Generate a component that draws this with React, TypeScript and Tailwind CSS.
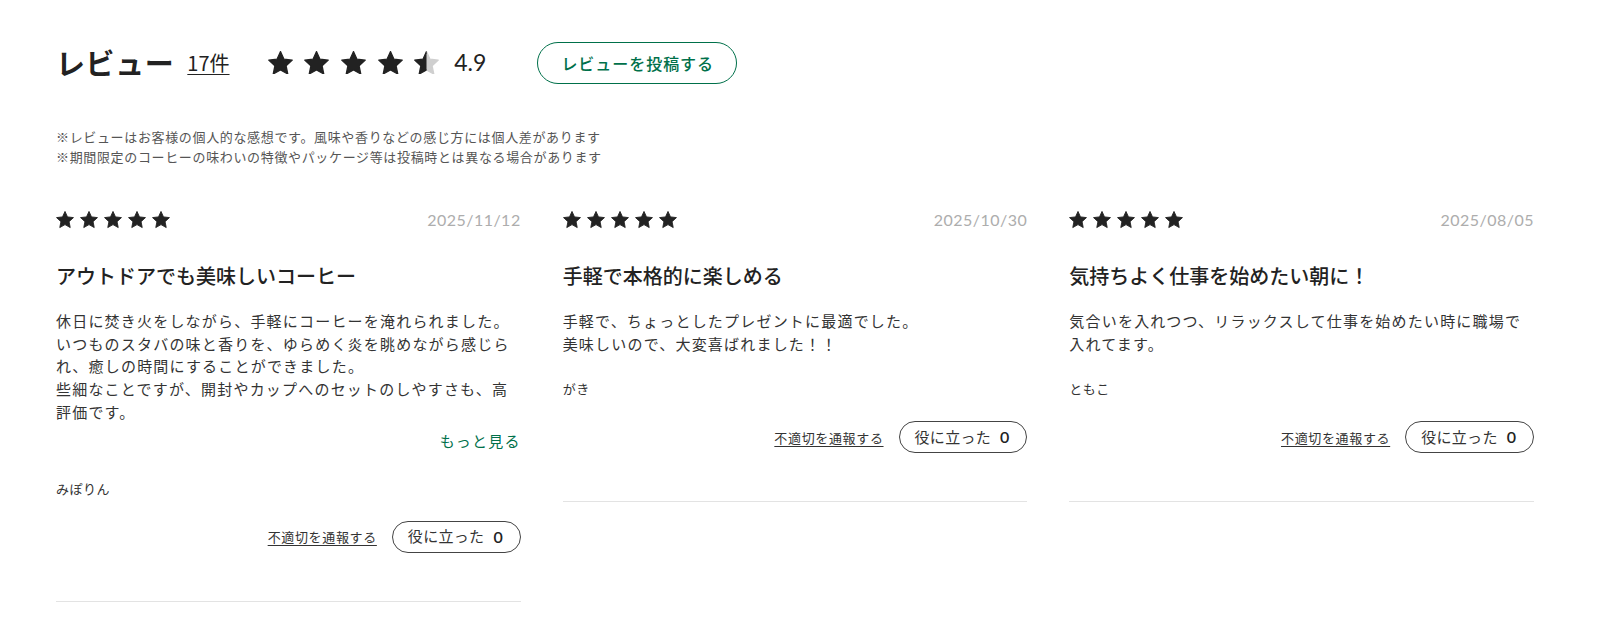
import React from "react";

const jp = "font-['Noto_Sans_CJK_JP',sans-serif]";
const num = "font-['Lato','Noto_Sans_CJK_JP',sans-serif]";

// chunky 5-point star, slightly rounded tips
const STAR = "50,0 64.11,30.58 97.55,34.55 72.83,57.42 79.39,90.45 50,74 20.61,90.45 27.17,57.42 2.45,34.55 35.89,30.58";

function Star({ size, fill = "#222" }: { size: number; fill?: string }) {
  return (
    <svg width={size} height={size * 0.95} viewBox="-0.5 -2.5 101 96">
      <polygon points={STAR} fill={fill} stroke={fill} strokeWidth="5" strokeLinejoin="round" />
    </svg>
  );
}

function HalfStar({ size }: { size: number }) {
  return (
    <svg width={size} height={size * 0.95} viewBox="-0.5 -2.5 101 96">
      <defs>
        <clipPath id="half-left">
          <rect x="-5" y="-5" width="55" height="110" />
        </clipPath>
      </defs>
      <polygon points={STAR} fill="#cfcfcf" stroke="#cfcfcf" strokeWidth="5" strokeLinejoin="round" />
      <polygon
        points={STAR}
        fill="#222"
        stroke="#222"
        strokeWidth="5"
        strokeLinejoin="round"
        clipPath="url(#half-left)"
      />
    </svg>
  );
}

type Review = {
  date: string;
  title: string;
  body: string;
  author: string;
  more?: boolean;
};

const reviews: Review[] = [
  {
    date: "2025/11/12",
    title: "アウトドアでも美味しいコーヒー",
    body: "休日に焚き火をしながら、手軽にコーヒーを淹れられました。\nいつものスタバの味と香りを、ゆらめく炎を眺めながら感じられ、癒しの時間にすることができました。\n些細なことですが、開封やカップへのセットのしやすさも、高評価です。",
    author: "みぽりん",
    more: true,
  },
  {
    date: "2025/10/30",
    title: "手軽で本格的に楽しめる",
    body: "手軽で、ちょっとしたプレゼントに最適でした。\n美味しいので、大変喜ばれました！！",
    author: "がき",
  },
  {
    date: "2025/08/05",
    title: "気持ちよく仕事を始めたい朝に！",
    body: "気合いを入れつつ、リラックスして仕事を始めたい時に職場で入れてます。",
    author: "ともこ",
  },
];

function ReviewCard({ r }: { r: Review }) {
  return (
    <div className="flex flex-col">
      <div className="flex h-[20px] items-center justify-between">
        <div className="flex items-center gap-[6px]">
          {[0, 1, 2, 3, 4].map((i) => (
            <Star key={i} size={18} />
          ))}
        </div>
        <span className={`${num} text-[16px] tracking-[0.03em] text-[#adadad]`}>{r.date}</span>
      </div>
      <h3 className={`${jp} mt-[32px] text-[20px] leading-[28px] font-medium text-[#222]`}>{r.title}</h3>
      <p className={`${jp} mt-[20px] whitespace-pre-line text-[15px] leading-[22.7px] tracking-[0.08em] text-[#333]`}>
        {r.body}
      </p>
      {r.more && (
        <div className="mt-[5px] flex justify-end pb-[2px]">
          <a className={`${jp} text-[15px] leading-[24px] tracking-[0.08em] text-[#00704a]`}>もっと見る</a>
        </div>
      )}
      <div className={`${jp} mt-[24px] text-[13px] leading-[20px] tracking-[0.04em] text-[#333]`}>{r.author}</div>
      <div className="mt-[22px] flex items-center justify-end gap-[15px]">
        <a className={`${jp} text-[13px] tracking-[0.05em] text-[#333] underline underline-offset-[3px]`}>不適切を通報する</a>
        <button className="flex h-[32px] items-center gap-[9px] rounded-full border border-[#444] pl-[15px] pr-[17px]">
          <span className={`${jp} text-[15px] tracking-[0.02em] text-[#333]`}>役に立った</span>
          <span className={`${num} text-[16px] font-semibold text-[#222]`}>0</span>
        </button>
      </div>
      <div className="mt-[48px] border-t border-[#e3e3e3]" />
    </div>
  );
}

export default function App() {
  return (
    <div className="min-h-[626px] bg-white pl-[56px] pt-[42px]">
      <div className="w-[1478px]">
        <div className="flex h-[41px] items-center">
          <h2 className={`${jp} text-[29px] font-bold leading-none tracking-[0.02em] text-[#222]`}>レビュー</h2>
          <a className={`${jp} ml-[13px] text-[20px] leading-none text-[#222] underline underline-offset-[3px] decoration-1`}>17件</a>
          <div className="ml-[38px] flex items-center gap-[11.7px]">
            {[0, 1, 2, 3].map((i) => (
              <Star key={i} size={25} />
            ))}
            <HalfStar size={25} />
          </div>
          <span className={`${num} ml-[15px] text-[23px] text-[#222]`}>4.9</span>
          <button className="ml-[51px] flex h-[42px] items-center rounded-full border border-[#00704a] pl-[23px] pr-[22px]">
            <span className={`${jp} text-[16px] font-medium tracking-[0.06em] text-[#00704a]`}>レビューを投稿する</span>
          </button>
        </div>
        <div className={`${jp} mt-[44px] text-[13px] leading-[20px] tracking-[0.05em] text-[#555]`}>
          <p>※レビューはお客様の個人的な感想です。風味や香りなどの感じ方には個人差があります</p>
          <p>※期間限定のコーヒーの味わいの特徴やパッケージ等は投稿時とは異なる場合があります</p>
        </div>
        <div className="mt-[43px] grid grid-cols-3 items-start gap-x-[42px]">
          {reviews.map((r) => (
            <ReviewCard key={r.date} r={r} />
          ))}
        </div>
      </div>
    </div>
  );
}
